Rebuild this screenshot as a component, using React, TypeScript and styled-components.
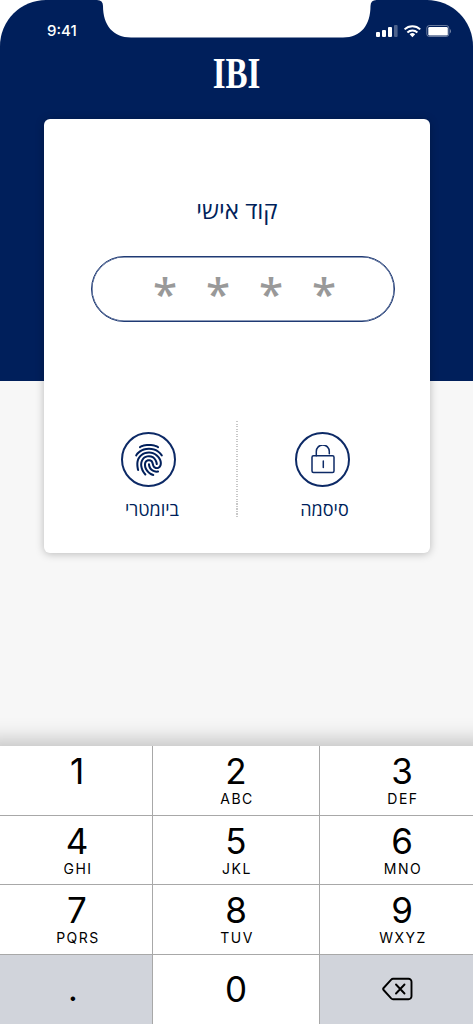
import { createGlobalStyle, styled } from 'styled-components'
import { IoFingerPrint } from 'react-icons/io5'

const GlobalStyle = createGlobalStyle`
  * {
    box-sizing: border-box;
  }
  body {
    margin: 0;
    background: white;
  }
`

const Screen = styled.div`
  position: relative;
  display: flex;
  flex-direction: column;
  width: 473px;
  height: 1024px;
  overflow: hidden;
  border-radius: 46px 46px 0 0;
  background: linear-gradient(#001f5b 381px, #f7f7f7 381px);
  font-family: 'Inter', 'Liberation Sans', sans-serif;
`

const Notch = styled.svg`
  position: absolute;
  top: 0;
  left: 97px;
`

const StatusBar = styled.div`
  display: flex;
  justify-content: space-between;
  align-items: center;
  height: 50px;
  padding: 12px 22px 0 47px;
  color: white;
`

const Time = styled.span`
  font-size: 15px;
  font-weight: 500;
  line-height: 18px;
`

const Logo = styled.h1`
  width: 100%;
  margin: 0;
  color: white;
  font-family: 'Liberation Serif', serif;
  font-size: 44px;
  font-weight: bold;
  line-height: 48px;
  text-align: center;
  transform: scaleX(0.75);
`

const Card = styled.main`
  display: flex;
  flex-direction: column;
  align-items: center;
  width: 386px;
  height: 434px;
  margin: 21px 0 0 44px;
  border-radius: 6px;
  background: white;
  box-shadow: 0 1px 8px rgba(0, 0, 0, 0.25);
  color: #001f5b;
  font-family: 'Open Sans', 'Noto Sans', sans-serif;
`

const Title = styled.h2`
  margin: 74px 0 0;
  font-size: 24px;
  font-weight: 400;
  line-height: 34px;
`

const CodeField = styled.div`
  display: flex;
  justify-content: center;
  width: 304px;
  height: 66px;
  margin: 29px 0 0 12px;
  padding-left: 3px;
  border: 1px solid #1f3a74;
  border-radius: 33px;
  box-shadow: inset 0 0 0 0.5px #1f3a74;
`

const Star = styled.span`
  width: 53px;
  color: #999;
  font-family: 'Noto Sans', 'Open Sans', sans-serif;
  font-size: 44px;
  font-weight: 500;
  line-height: 73px;
  text-align: center;
`

const Options = styled.div`
  display: flex;
  justify-content: center;
  width: 100%;
  margin-top: 99px;
  padding-right: 3px;
`

const Option = styled.div`
  display: flex;
  flex-direction: column;
  align-items: center;
  width: 120px;
  padding-top: 11px;
`

const Divider = styled.div`
  width: 2px;
  height: 96px;
  margin: 0 25px 0 27px;
  background: repeating-linear-gradient(#c8c8c8 0 1.3px, white 1.3px 2.5px);
`

const Circle = styled.div`
  display: flex;
  justify-content: center;
  align-items: center;
  width: 55px;
  height: 55px;
  border: 2px solid #0d2a66;
  border-radius: 50%;
`

const OptionLabel = styled.span<{ $indent: number }>`
  margin-top: 9px;
  padding-left: ${(p) => p.$indent}px;
  font-size: 18px;
  line-height: 26px;
`

const Keypad = styled.div`
  display: grid;
  grid-template-columns: 153px 167px 153px;
  grid-template-rows: 70px 69px 70px 69px;
  height: 278px;
  margin-top: auto;
  box-shadow: 0 14px 20px 20px rgba(0, 0, 0, 0.22);
`

const Key = styled.div<{ $gray?: boolean; $shift?: number }>`
  display: flex;
  flex-direction: column;
  align-items: center;
  padding: 4px 0 0 ${(p) => p.$shift || 0}px;
  border-right: 1px solid #a8a8a8;
  border-bottom: 1px solid #a8a8a8;
  background: ${(p) => (p.$gray ? '#d1d4db' : 'white')};
  color: black;

  &:nth-child(3n) {
    border-right: none;
  }
  &:nth-child(n + 10) {
    justify-content: center;
    padding-top: 0;
    padding-bottom: 2px;
    border-bottom: none;
  }
`

const Digit = styled.span`
  font-size: 35px;
  line-height: 42px;
`

const Dot = styled.span`
  padding: 1px 6px 0 0;
  font-size: 34px;
  line-height: 42px;
`

const Letters = styled.span`
  padding-left: 2px;
  font-size: 14px;
  letter-spacing: 1.5px;
  line-height: 14px;
`

const keys = [
  ['1', ''],
  ['2', 'ABC'],
  ['3', 'DEF'],
  ['4', 'GHI'],
  ['5', 'JKL'],
  ['6', 'MNO'],
  ['7', 'PQRS'],
  ['8', 'TUV'],
  ['9', 'WXYZ'],
]

// the digits are not quite centred in the outer columns
const shifts = [2, 0, 11]

const StatusIcons = () => (
  <svg width="76" height="14" viewBox="375 24 76 14" fill="white">
    <rect x="376" y="32" width="4" height="5" rx="1" />
    <rect x="382" y="30" width="4" height="7" rx="1" />
    <rect x="388" y="27" width="4" height="10" rx="1" />
    <rect x="394" y="25" width="3.6" height="12" rx="1" opacity="0.3" />
    <g fill="none" stroke="white" strokeWidth="2">
      <path d="M404.6 29.4a11.3 11.3 0 0 1 15.6 0" />
      <path d="M407.4 32.5a7.2 7.2 0 0 1 10 0" />
    </g>
    <path d="M409.6 34.3a4 4 0 0 1 5.6 0l-2.8 2.9z" />
    <rect
      x="426.8"
      y="25.5"
      width="22"
      height="11"
      rx="2.5"
      fill="none"
      stroke="white"
      opacity="0.4"
    />
    <rect x="428.3" y="27" width="19.5" height="8.6" rx="1.3" />
    <path d="M449.8 29v4.4q1.2-.6 1.2-2.2t-1.2-2.2" opacity="0.45" />
  </svg>
)

const LockIcon = () => (
  <svg
    width="24"
    height="30"
    viewBox="0 0 24 30"
    fill="none"
    stroke="#0d2a66"
    strokeWidth="1.5"
    strokeLinecap="round"
  >
    <rect x="1" y="10.8" width="22" height="16.8" rx="1.5" />
    <path d="M5.3 10.7V6.5a6.5 6.5 0 0 1 13 0v2.3" />
    <path d="M12.3 16v6.5" />
  </svg>
)

const BackspaceIcon = () => (
  <svg
    width="31"
    height="24"
    viewBox="0 0 31 24"
    fill="none"
    stroke="black"
    strokeWidth="1.9"
    strokeLinejoin="round"
    strokeLinecap="round"
  >
    <path d="M11 1.8h15.5a3 3 0 0 1 3 3v14.4a3 3 0 0 1-3 3H11q-1 0-1.8-.8L1.6 13q-.9-1 0-2L9.2 2.6q.8-.8 1.8-.8z" />
    <path d="m14 7.5 8.5 9m0-9-8.5 9" />
  </svg>
)

export default function App() {
  return (
    <>
      <GlobalStyle />
      <Screen>
        <Notch width="280" height="38" viewBox="0 0 280 38" fill="white">
          <path d="M0 0Q6 0 6 6C6 25 16 37.5 34 37.5H246C264 37.5 273.5 25 273.5 6Q273.5 0 279.5 0z" />
        </Notch>
        <StatusBar>
          <Time>9:41</Time>
          <StatusIcons />
        </StatusBar>
        <Logo>IBI</Logo>
        <Card>
          <Title dir="rtl">קוד אישי</Title>
          <CodeField>
            {[0, 1, 2, 3].map((i) => (
              <Star key={i}>*</Star>
            ))}
          </CodeField>
          <Options>
            <Option>
              <Circle>
                <IoFingerPrint size={34} />
              </Circle>
              <OptionLabel $indent={7}>ביומטרי</OptionLabel>
            </Option>
            <Divider />
            <Option>
              <Circle>
                <LockIcon />
              </Circle>
              <OptionLabel $indent={4}>סיסמה</OptionLabel>
            </Option>
          </Options>
        </Card>
        <Keypad>
          {keys.map(([digit, letters], i) => (
            <Key key={digit} $shift={shifts[i % 3]}>
              <Digit>{digit}</Digit>
              <Letters>{letters}</Letters>
            </Key>
          ))}
          <Key $gray>
            <Dot>.</Dot>
          </Key>
          <Key>
            <Digit>0</Digit>
          </Key>
          <Key $gray $shift={2}>
            <BackspaceIcon />
          </Key>
        </Keypad>
      </Screen>
    </>
  )
}
